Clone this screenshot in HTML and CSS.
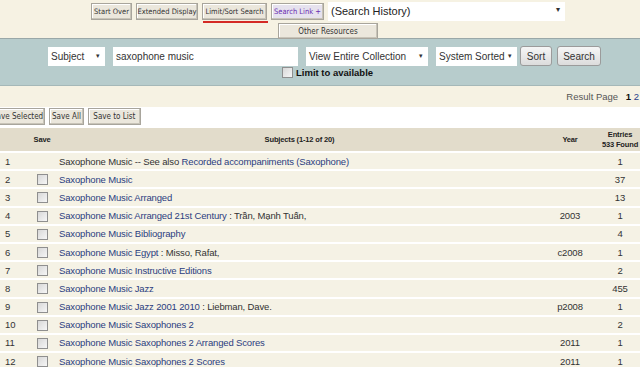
FILE: index.html
```html
<!DOCTYPE html>
<html lang="en">
<head>
    <meta charset="UTF-8">
    <title>Subject Search: saxophone music</title>
    <link rel="stylesheet" href="styles.css">
</head>
<body>
    <div class="topbar">
        <div class="nav_row">
            <button class="nav_btn w41">Start Over</button>
            <button class="nav_btn w62">Extended Display</button>
            <button class="nav_btn w65 current">Limit/Sort Search</button>
            <button class="nav_btn w53 link_btn">Search Link +</button>
            <div class="history">(Search History)<span class="arrow">&#9662;</span></div>
        </div>
        <div class="nav_row second">
            <button class="nav_btn wide">Other Resources</button>
        </div>
    </div>

    <div class="searchbar">
        <div class="search_row">
            <div class="sel sel_subject">Subject<span class="arrow">&#9662;</span></div>
            <div class="query">saxophone music</div>
            <div class="sel sel_coll">View Entire Collection<span class="arrow">&#9662;</span></div>
            <div class="sel sel_sort">System Sorted<span class="arrow">&#9662;</span></div>
            <button class="round_btn btn_sort">Sort</button>
            <button class="round_btn btn_search">Search</button>
        </div>
        <div class="limit_row">
            <span class="box"></span><span class="limit_label">Limit to available</span>
        </div>
    </div>

    <div class="pager">
        Result Page <b>1</b> <a href="#">2</a>
    </div>

    <div class="save_row">
        <button class="nav_btn save_sel">Save Selected</button>
        <button class="nav_btn">Save All</button>
        <button class="nav_btn save_list">Save to List</button>
    </div>

    <table class="results">
        <thead>
            <tr>
                <th class="c_num"></th>
                <th class="c_save">Save</th>
                <th class="c_subj">Subjects (1-12 of 20)</th>
                <th class="c_year">Year</th>
                <th class="c_ent">Entries<br>533 Found</th>
            </tr>
        </thead>
        <tbody>
            <tr><td class="c_num">1</td><td class="c_save"></td><td class="c_subj">Saxophone Music -- See also <a href="#">Recorded accompaniments (Saxophone)</a></td><td class="c_year"></td><td class="c_ent">1</td></tr>
            <tr><td class="c_num">2</td><td class="c_save"><span class="box"></span></td><td class="c_subj"><a href="#">Saxophone Music</a></td><td class="c_year"></td><td class="c_ent">37</td></tr>
            <tr><td class="c_num">3</td><td class="c_save"><span class="box"></span></td><td class="c_subj"><a href="#">Saxophone Music Arranged</a></td><td class="c_year"></td><td class="c_ent">13</td></tr>
            <tr><td class="c_num">4</td><td class="c_save"><span class="box"></span></td><td class="c_subj"><a href="#">Saxophone Music Arranged 21st Century</a> : Trần, Mạnh Tuấn,</td><td class="c_year">2003</td><td class="c_ent">1</td></tr>
            <tr><td class="c_num">5</td><td class="c_save"><span class="box"></span></td><td class="c_subj"><a href="#">Saxophone Music Bibliography</a></td><td class="c_year"></td><td class="c_ent">4</td></tr>
            <tr><td class="c_num">6</td><td class="c_save"><span class="box"></span></td><td class="c_subj"><a href="#">Saxophone Music Egypt</a> : Misso, Rafat,</td><td class="c_year">c2008</td><td class="c_ent">1</td></tr>
            <tr><td class="c_num">7</td><td class="c_save"><span class="box"></span></td><td class="c_subj"><a href="#">Saxophone Music Instructive Editions</a></td><td class="c_year"></td><td class="c_ent">2</td></tr>
            <tr><td class="c_num">8</td><td class="c_save"><span class="box"></span></td><td class="c_subj"><a href="#">Saxophone Music Jazz</a></td><td class="c_year"></td><td class="c_ent">455</td></tr>
            <tr><td class="c_num">9</td><td class="c_save"><span class="box"></span></td><td class="c_subj"><a href="#">Saxophone Music Jazz 2001 2010</a> : Liebman, Dave.</td><td class="c_year">p2008</td><td class="c_ent">1</td></tr>
            <tr><td class="c_num">10</td><td class="c_save"><span class="box"></span></td><td class="c_subj"><a href="#">Saxophone Music Saxophones 2</a></td><td class="c_year"></td><td class="c_ent">2</td></tr>
            <tr><td class="c_num">11</td><td class="c_save"><span class="box"></span></td><td class="c_subj"><a href="#">Saxophone Music Saxophones 2 Arranged Scores</a></td><td class="c_year">2011</td><td class="c_ent">1</td></tr>
            <tr><td class="c_num">12</td><td class="c_save"><span class="box"></span></td><td class="c_subj"><a href="#">Saxophone Music Saxophones 2 Scores</a></td><td class="c_year">2011</td><td class="c_ent">1</td></tr>
        </tbody>
    </table>
</body>
</html>
```

FILE: styles.css
```css
body {
    margin: 0;
    background: #fff;
    font-family: "Liberation Sans", Arial, sans-serif;
    color: #222;
    overflow: hidden;
}

/* top navigation */
.topbar {
    height: 38px;
    background-color: #f6f2e3;
    border-bottom: 1px solid #9aa8a8;
}
.nav_row {
    display: flex;
    align-items: center;
    gap: 4px;
    padding-left: 91px;
    padding-top: 2px;
}
.nav_row.second {
    padding-left: 278px;
    padding-top: 2px;
}
.nav_btn {
    height: 17px;
    padding: 0 2px;
    font-family: "DejaVu Sans Condensed", "DejaVu Sans", sans-serif;
    font-size: 8px;
    color: #333;
    white-space: nowrap;
    background-color: #ebe7dc;
    border: 1px solid #a8a59c;
    box-shadow: inset -1px -1px 0 #c8c4b8, inset 1px 1px 0 #fff;
    border-radius: 0;
    cursor: pointer;
}
.nav_row .nav_btn {
    padding: 0;
    font-size: 7.5px;
}
.w41 { width: 41px; }
.w62 { width: 62px; }
.w65 { width: 65px; }
.w53 { width: 53px; }
.nav_btn.current {
    position: relative;
}
.nav_btn.current::after {
    content: "";
    position: absolute;
    left: 0;
    right: -2px;
    bottom: -4px;
    height: 2px;
    background: #d42a25;
}
.link_btn {
    color: #6a2bb0;
    background-color: #e6e2ee;
}
.nav_row .nav_btn.wide {
    width: 100px;
    height: 16px;
    font-size: 8px;
}
.history {
    position: relative;
    width: 237px;
    height: 19px;
    box-sizing: border-box;
    padding: 3px 0 0 3px;
    background: #fff;
    font-size: 11px;
    color: #222;
}
.arrow {
    position: absolute;
    right: 5px;
    top: 3px;
    font-size: 8px;
    color: #333;
}

/* search bar */
.searchbar {
    height: 46px;
    background-color: #b7cccc;
    border-bottom: 1px solid #a5b8b8;
}
.search_row {
    display: flex;
    align-items: center;
    padding-left: 48px;
    padding-top: 7px;
}
.sel, .query {
    position: relative;
    height: 19px;
    box-sizing: border-box;
    padding: 4px 0 0 3px;
    background: #fff;
    font-size: 10px;
    color: #333;
    white-space: nowrap;
}
.sel .arrow {
    top: 5px;
    font-size: 7px;
}
.sel_subject { width: 57px; margin-right: 8px; }
.query { width: 185px; margin-right: 8px; }
.sel_coll { width: 122px; margin-right: 8px; }
.sel_sort { width: 81px; margin-right: 3px; }
.round_btn {
    height: 20px;
    padding: 0;
    margin-right: 5px;
    font-family: "Liberation Sans", Arial, sans-serif;
    font-size: 10px;
    color: #333;
    background: linear-gradient(#f6f6f6, #dcdcdc);
    border: 1px solid #9b9b9b;
    border-radius: 3px;
}
.btn_sort { width: 32px; }
.btn_search { width: 44px; }
.limit_row {
    display: flex;
    align-items: center;
    padding-left: 282px;
    padding-top: 1px;
}
.limit_label {
    margin-left: 3px;
    font-size: 9.5px;
    font-weight: bold;
    color: #111;
}
.box {
    display: inline-block;
    width: 9px;
    height: 9px;
    background: linear-gradient(135deg, #d8d8d8, #f6f6f6);
    border: 1px solid #8f8f8f;
}

/* pager + save buttons */
.pager {
    height: 21px;
    box-sizing: border-box;
    padding: 5px 1px 0 0;
    text-align: right;
    background-color: #f6f2e3;
    font-size: 9.5px;
    color: #555;
}
.pager b {
    margin-left: 5px;
    color: #111;
}
.pager a {
    color: #2b3d88;
    text-decoration: none;
}
.save_row {
    display: flex;
    gap: 4px;
    height: 21px;
    padding-top: 1px;
    box-sizing: border-box;
    margin-left: -11px;
}
.save_sel { width: 56px; }
.save_list { width: 53px; }

/* results table */
.results {
    width: 640px;
    table-layout: fixed;
    border-collapse: collapse;
    font-size: 9.5px;
    letter-spacing: -0.15px;
}
.results th {
    height: 23px;
    padding: 0;
    font-size: 7.5px;
    font-weight: bold;
    color: #222;
    white-space: nowrap;
    background-color: #e2dccb;
    border-bottom: 2px solid #fff;
    line-height: 10px;
}
.results td {
    height: 16.2px;
    padding: 0;
    background-color: #f5f2e5;
    border-bottom: 2px solid #fff;
    color: #333;
    white-space: nowrap;
}
.results a {
    color: #2b3d80;
    text-decoration: none;
}
.c_num { width: 25px; padding-left: 5px !important; text-align: left; }
.c_save { width: 24px; text-align: center; }
.c_save .box { vertical-align: middle; }
.c_subj { padding-left: 5px !important; text-align: left; }
.results th.c_subj { text-align: center; }
.c_year { width: 60px; text-align: center; }
.c_ent { width: 40px; text-align: center; }
```
